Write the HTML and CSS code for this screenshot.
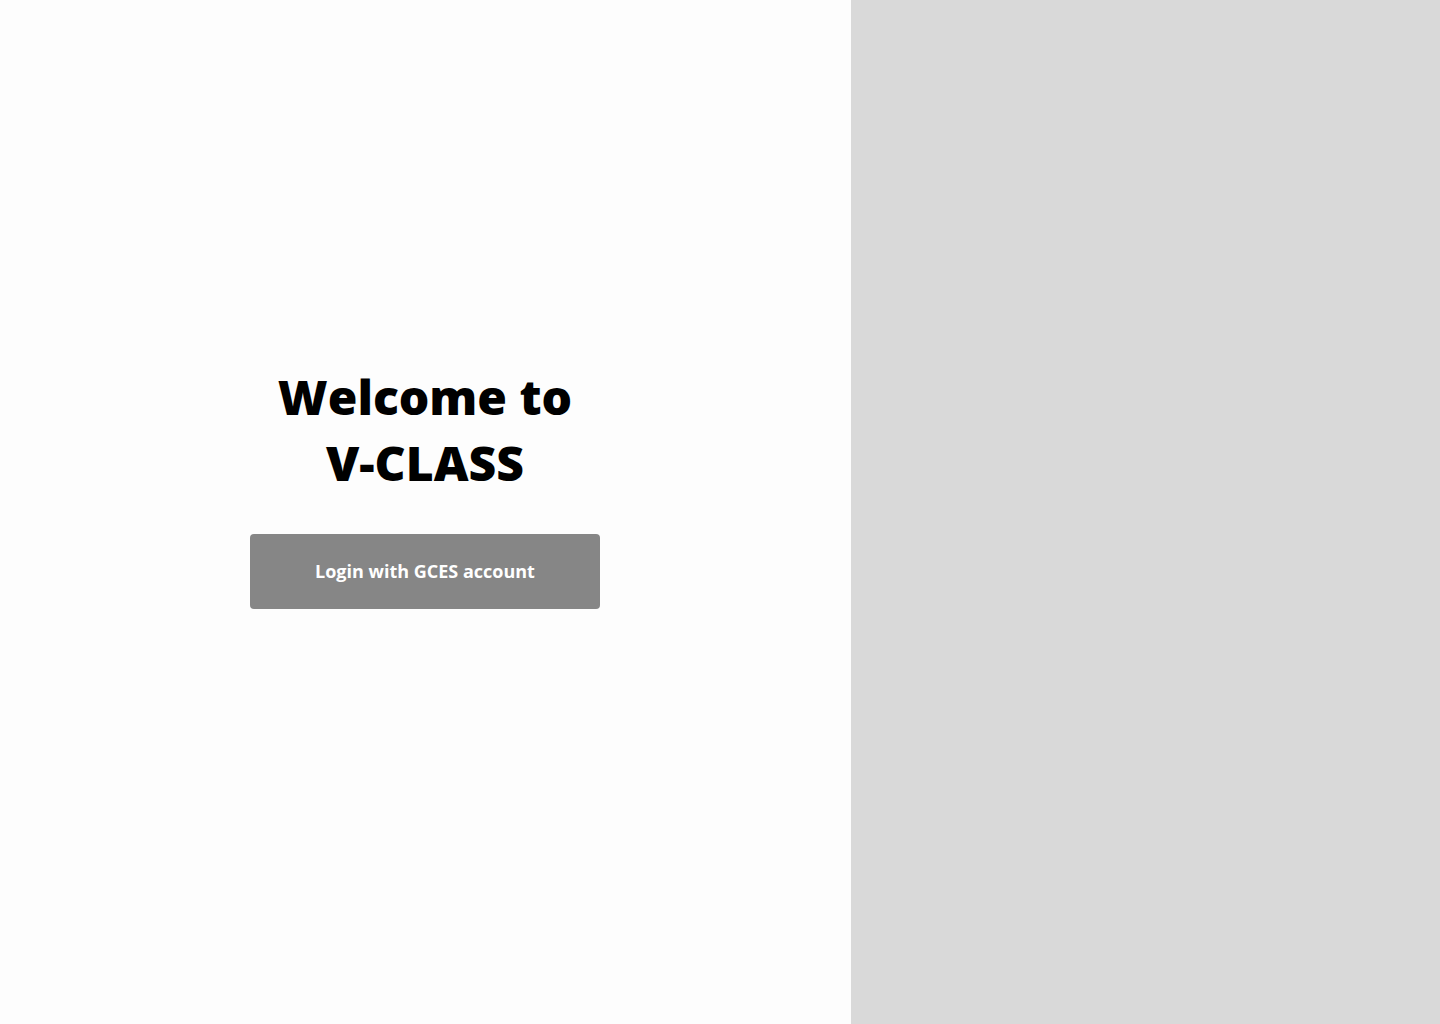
FILE: index.html
```html
<!DOCTYPE html>
<html lang="en">
<head>
<meta charset="utf-8">
<title>V-CLASS Login</title>
<link rel="stylesheet" href="styles.css">
</head>
<body>
<main class="page">
  <section class="left">
    <div class="content">
      <h1 class="title">Welcome to<br>V-CLASS</h1>
      <button class="login-btn" type="button">Login with GCES account</button>
    </div>
  </section>
  <aside class="right"></aside>
</main>
</body>
</html>
```
FILE: styles.css
```css
* { box-sizing: border-box; }
html, body { margin: 0; padding: 0; height: 100%; }
body { font-family: "Open Sans", "Noto Sans", sans-serif; }
.page { display: flex; width: 1440px; height: 1024px; }
.left {
  width: 851px;
  background: #fdfdfd;
  display: flex;
  justify-content: center;
  padding: 364px 1px 0 0;
}
.right { flex: 1; background: #d9d9d9; }
.content { display: flex; flex-direction: column; align-items: center; }
.title {
  margin: 0;
  font-size: 48px;
  line-height: 66px;
  font-weight: 800;
  color: #000;
  text-align: center;
}
.login-btn {
  margin-top: 38px;
  width: 350px;
  height: 75px;
  padding: 0 0 2px;
  border: none;
  border-radius: 4px;
  background: #868686;
  color: #fff;
  font-family: "Open Sans", "Noto Sans", sans-serif;
  font-size: 18px;
  font-weight: 700;
  cursor: pointer;
}
```
